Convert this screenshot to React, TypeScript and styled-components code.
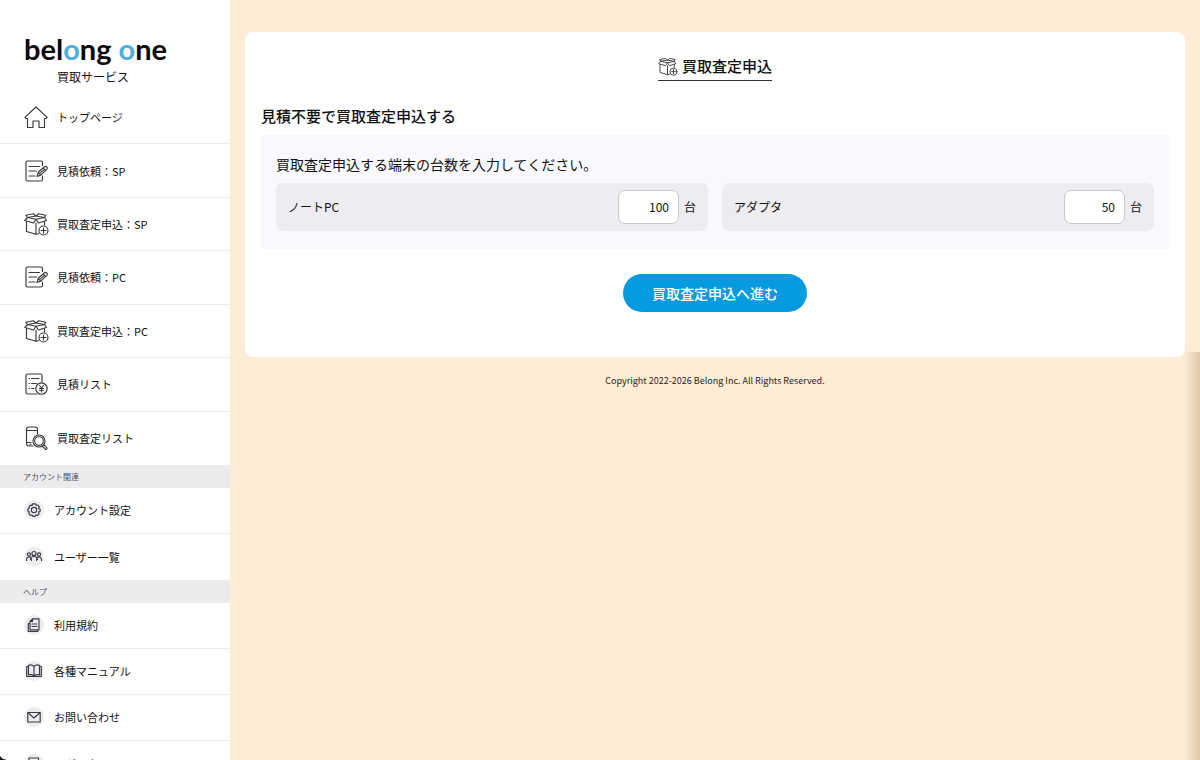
import React from "react";
import styled, { createGlobalStyle } from "styled-components";

const GlobalStyle = createGlobalStyle`
  *, *::before, *::after { box-sizing: border-box; }
  body {
    margin: 0;
    background: #feedd6;
    color: #111;
    font-family: "Noto Sans CJK JP", "Noto Sans", sans-serif;
    font-size: 12px;
    line-height: 18px;
  }
  h1, h2, h3, p, ul { margin: 0; padding: 0; }
  ul { list-style: none; }
`;

const Shell = styled.div`
  display: grid;
  grid-template-columns: 230px minmax(0, 1fr);
  height: 100vh;
`;

const EdgeShade = styled.div`
  position: fixed;
  top: 352px;
  right: 0;
  bottom: 0;
  width: 16px;
  background: linear-gradient(to right, rgba(120, 95, 50, 0), rgba(120, 95, 50, 0.26));
  pointer-events: none;
`;

const WindowCorner = styled.div`
  position: fixed;
  left: 0;
  bottom: 0;
  width: 6px;
  height: 7px;
  background: radial-gradient(circle at 100% 0, transparent 6px, #1a1a1e 7px);
  pointer-events: none;
`;

const Sidebar = styled.aside`
  background: #fefefe;
  overflow-y: auto;
  scrollbar-width: none;
`;

const Brand = styled.header`
  padding: 32px 24px 0;
  height: 91px;
`;

const Logo = styled.a`
  display: block;
  color: #0b0b0f;
  font-family: Lato, sans-serif;
  font-size: 29px;
  font-weight: 700;
  line-height: 34px;
  text-decoration: none;
  white-space: nowrap;
`;

const Accent = styled.span`
  color: #4bb0dc;
`;

const Service = styled.p`
  padding: 2px 0 0 33px;
`;

const MainNav = styled.ul`
  display: grid;
  grid-auto-rows: 1fr;
  min-height: 374px;
`;

const SubNav = styled.ul`
  display: grid;
  grid-auto-rows: 46px;
`;

const NavItem = styled.li`
  display: grid;
  border-bottom: 1px solid #ececf0;
  &:last-child { border-bottom: 0; }
`;

const NavLink = styled.a<{ $compact?: boolean }>`
  display: flex;
  align-items: center;
  gap: ${(p) => (p.$compact ? 10 : 9)}px;
  padding: ${(p) => (p.$compact ? "0 24px 1px" : "0 24px")};
  color: inherit;
  font-size: 11px;
  text-decoration: none;
`;

const SectionLabel = styled.h3`
  padding: 0 23px;
  background: #ecebee;
  color: #555;
  font-size: 8px;
  font-weight: 400;
  line-height: 23px;
`;

const IconBubble = styled.span`
  display: grid;
  place-items: center;
  width: 20px;
  height: 20px;
  border-radius: 50%;
  background: #ededf0;
`;

const Svg = styled.svg<{ $size: number }>`
  flex: none;
  width: ${(p) => p.$size}px;
  height: ${(p) => p.$size}px;
  fill: none;
  stroke: #3a3a3e;
  stroke-width: 1.15;
  stroke-linecap: round;
  stroke-linejoin: round;
  overflow: visible;
`;

const Main = styled.main`
  padding: 32px 15px;
`;

const Card = styled.section`
  padding: 22px 16px 45px;
  border-radius: 8px;
  background: #fff;
`;

const TitleRow = styled.div`
  display: flex;
  justify-content: center;
`;

const Title = styled.h1`
  display: flex;
  align-items: center;
  gap: 5px;
  padding-bottom: 2px;
  border-bottom: 1px solid #333;
  font-size: 15px;
  font-weight: 500;
  line-height: 24px;
`;

const Heading = styled.h2`
  margin-top: 23px;
  font-size: 15px;
  font-weight: 500;
  line-height: 24px;
`;

const Panel = styled.div`
  margin-top: 7px;
  padding: 17px 15px 18px;
  background: #f9f9fd;
`;

const Lead = styled.p`
  font-size: 14px;
  line-height: 24px;
`;

const Fields = styled.div`
  display: grid;
  grid-template-columns: 1fr 1fr;
  gap: 14px;
  margin-top: 7px;
`;

const Field = styled.div`
  display: flex;
  align-items: center;
  gap: 5px;
  padding: 7px 12px;
  border-radius: 7px;
  background: #edecf0;
`;

const FieldLabel = styled.label`
  flex: 1;
`;

const Count = styled.input`
  width: 61px;
  height: 34px;
  padding: 0 9px 1px;
  border: 1px solid #c9c9ce;
  border-radius: 7px;
  background: #fff;
  color: inherit;
  font: inherit;
  text-align: right;
`;

const Actions = styled.div`
  display: flex;
  justify-content: center;
  margin-top: 25px;
`;

const Submit = styled.button`
  padding: 7px 29px;
  border: 0;
  border-radius: 19px;
  background: #069ade;
  color: #fff;
  font: inherit;
  font-size: 14px;
  font-weight: 500;
  line-height: 24px;
`;

const Footer = styled.footer`
  padding-top: 16px;
  color: #2b241c;
  font-size: 9px;
  line-height: 16px;
  text-align: center;
`;

const HomeIcon = () => (
  <Svg $size={24} viewBox="0 0 24 24" aria-hidden="true">
    <path d="M.8 12.300 12 2l11.200 10.300-1 1.200H20.500V22.500H15V16H9v6.500H3.500v-9H1.800z" />
  </Svg>
);

const EstimateIcon = () => (
  <Svg $size={24} viewBox="0 0 24 24" aria-hidden="true">
    <path d="M18.500 6.500V3.500Q18.500 2 17 2H3.500Q2 2 2 3.500v17Q2 22 3.500 22H17q1.500 0 1.500-1.500V17M5 7.500h10.500M5 12h7.500M5 17h6" />
    <path d="m13 17.500 1.200-4.200 6.300-5.600q1.200-.9 2.300.3t.1 2.400l-6.200 5.700zM14.200 13.300l2.500 2.900M19.300 8.800l2.500 2.800M15.600 14.600l5-4.500" />
  </Svg>
);

const BoxIcon = ({ size = 24 }: { size?: number }) => (
  <Svg $size={size} viewBox="0 0 24 24" aria-hidden="true">
    <path d="M2.500 9.500v10L12 22.300l2.500-.6M20.500 9.500v3.500M12 11v11.300" />
    <path d="M3.500 5.500 12 7.200 20.500 5.500 12 4zM3.500 5.500.8 8.500 9.500 11 12 7.200l2.500 3.800 8-2.500-2-3M3.500 5.500 1.800 3.200 9.300 1.800 12 4l2.700-2.200 7.100 1.400L20.500 5.500" />
    <circle cx="19.500" cy="18.500" r="4.500" />
    <path d="M19.500 16v5M17 18.500h5" />
  </Svg>
);

const YenListIcon = () => (
  <Svg $size={24} viewBox="0 0 24 24" aria-hidden="true">
    <path d="M18 10V3.500Q18 2 16.500 2H3.500Q2 2 2 3.500v17Q2 22 3.500 22H13M5 6.500h.5M7.500 6.500H15M5 11.500h.5M7.500 11.500h5M5 16.500h.5M7.500 16.500h2.500" />
    <circle cx="17.500" cy="16.500" r="5.700" />
    <path d="m15.500 13.500 2 2.500 2-2.500M17.500 16v4M15.500 16.500h4M15.500 18.200h4" />
  </Svg>
);

const PhoneSearchIcon = () => (
  <Svg $size={24} viewBox="0 0 24 24" aria-hidden="true">
    <path d="M13.500 8V3.500Q13.500 1 11 1H5Q2.500 1 2.500 3.500v14Q2.500 20 5 20h4M2.500 4.500h11M2.500 16.500H7M6 18.300h1" />
    <circle cx="15" cy="15" r="6" />
    <circle cx="15" cy="15" r="4.300" />
    <path d="m19.500 18.500 3.300 3.200q.5.800-.1 1.400t-1.400.1L18 20" />
  </Svg>
);

const GearIcon = () => (
  <Svg $size={14} viewBox="0 0 14 14" aria-hidden="true">
    <path d="M5.500.8h3l.6 1.500 1.700-.3 1.500 1.900-.8 1.500 1.700 1v1.900l-1.700.8.5 1.900-1.800 1.500-1.500-.5-.8 1.400H6l-.9-1.400-1.700.4L1.800 10.700l.5-1.700-1.500-.9V6.200l1.500-.9L2 3.700l1.700-1.600 1.500.4z" />
    <circle cx="7" cy="7" r="2.700" />
  </Svg>
);

const UsersIcon = () => (
  <Svg $size={16} viewBox="0 0 16 16" aria-hidden="true">
    <circle cx="8" cy="4.500" r="2" />
    <circle cx="3" cy="5.500" r="1.600" />
    <circle cx="13" cy="5.500" r="1.600" />
    <path d="M4.500 10.500q0-3 3.500-3t3.500 3M.5 11.500Q.5 8 3 8t2.500 3.500M10.500 11.500Q10.500 8 13 8t2.500 3.500" />
  </Svg>
);

const TermsIcon = () => (
  <Svg $size={14} viewBox="0 0 14 14" aria-hidden="true">
    <path d="M5.500.8h6.500v11H3V3.500zM5.500.8v2.700H3M5 6h5M5 8.500h5M3 5.500H1.300v8h9.500v-1.700" />
  </Svg>
);

const BookIcon = () => (
  <Svg $size={16} viewBox="0 0 16 16" aria-hidden="true">
    <path d="M8 3.500Q5.500 1 2.500 2.500v9.500Q5.500 11 8 13q2.500-2 5.500-1V2.500Q10.500 1 8 3.500zV13M2.500 3.500H.7v10h14.600v-10h-1.800" />
  </Svg>
);

const MailIcon = () => (
  <Svg $size={14} viewBox="0 0 14 14" aria-hidden="true">
    <path d="M.8 2.500h12.400v9.500H.8zl6.200 5.500 6.200-5.500" />
  </Svg>
);

const PageIcon = () => (
  <Svg $size={14} viewBox="0 0 14 14" aria-hidden="true">
    <path d="M2 1h9.500v12H2zM4 4h5.500M4 7h5.500" />
  </Svg>
);

type Item = { label: string; icon: React.ReactNode };

const mainItems: Item[] = [
  { label: "トップページ", icon: <HomeIcon /> },
  { label: "見積依頼：SP", icon: <EstimateIcon /> },
  { label: "買取査定申込：SP", icon: <BoxIcon /> },
  { label: "見積依頼：PC", icon: <EstimateIcon /> },
  { label: "買取査定申込：PC", icon: <BoxIcon /> },
  { label: "見積リスト", icon: <YenListIcon /> },
  { label: "買取査定リスト", icon: <PhoneSearchIcon /> },
];

const accountItems: Item[] = [
  { label: "アカウント設定", icon: <GearIcon /> },
  { label: "ユーザー一覧", icon: <UsersIcon /> },
];

const helpItems: Item[] = [
  { label: "利用規約", icon: <TermsIcon /> },
  { label: "各種マニュアル", icon: <BookIcon /> },
  { label: "お問い合わせ", icon: <MailIcon /> },
  { label: "ログアウト", icon: <PageIcon /> },
];

const SubItems = ({ items }: { items: Item[] }) => (
  <SubNav>
    {items.map((item) => (
      <NavItem key={item.label}>
        <NavLink href="#" $compact>
          <IconBubble>{item.icon}</IconBubble>
          {item.label}
        </NavLink>
      </NavItem>
    ))}
  </SubNav>
);

const CountField = ({ id, label, value }: { id: string; label: string; value: string }) => (
  <Field>
    <FieldLabel htmlFor={id}>{label}</FieldLabel>
    <Count id={id} inputMode="numeric" defaultValue={value} />
    <span>台</span>
  </Field>
);

export default function App() {
  return (
    <>
      <GlobalStyle />
      <Shell>
        <Sidebar>
          <Brand>
            <Logo href="#">
              bel<Accent>o</Accent>ng <Accent>o</Accent>ne
            </Logo>
            <Service>買取サービス</Service>
          </Brand>
          <nav>
            <MainNav>
              {mainItems.map((item) => (
                <NavItem key={item.label}>
                  <NavLink href="#">
                    {item.icon}
                    {item.label}
                  </NavLink>
                </NavItem>
              ))}
            </MainNav>
            <SectionLabel>アカウント関連</SectionLabel>
            <SubItems items={accountItems} />
            <SectionLabel>ヘルプ</SectionLabel>
            <SubItems items={helpItems} />
          </nav>
        </Sidebar>
        <Main>
          <Card>
            <TitleRow>
              <Title>
                <BoxIcon size={19} />
                買取査定申込
              </Title>
            </TitleRow>
            <Heading>見積不要で買取査定申込する</Heading>
            <form onSubmit={(e) => e.preventDefault()}>
              <Panel>
                <Lead>買取査定申込する端末の台数を入力してください。</Lead>
                <Fields>
                  <CountField id="laptop" label="ノートPC" value="100" />
                  <CountField id="adapter" label="アダプタ" value="50" />
                </Fields>
              </Panel>
              <Actions>
                <Submit type="submit">買取査定申込へ進む</Submit>
              </Actions>
            </form>
          </Card>
          <Footer>Copyright 2022-2026 Belong Inc. All Rights Reserved.</Footer>
        </Main>
      </Shell>
      <EdgeShade />
      <WindowCorner />
    </>
  );
}
